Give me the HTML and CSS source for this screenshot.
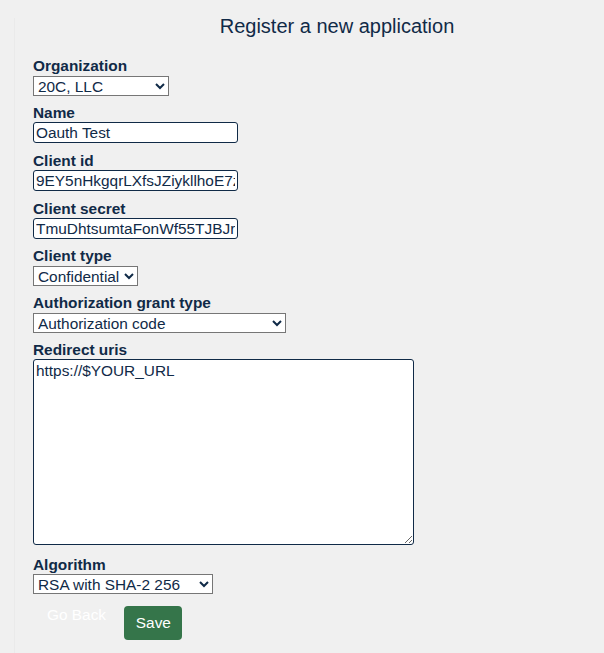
FILE: index.html
```html
<!DOCTYPE html>
<html lang="en">
<head>
<meta charset="utf-8">
<title>Register a new application</title>
<link rel="stylesheet" href="styles.css">
</head>
<body>
<div class="page">
  <h1 class="title">Register a new application</h1>
  <form class="form">
    <div class="field">
      <label class="label" for="org">Organization</label>
      <select id="org" class="select select-org"><option>20C, LLC</option></select>
    </div>
    <div class="field">
      <label class="label" for="name">Name</label>
      <input id="name" class="input" type="text" value="Oauth Test">
    </div>
    <div class="field">
      <label class="label" for="cid">Client id</label>
      <input id="cid" class="input" type="text" value="9EY5nHkgqrLXfsJZiykllhoE7zQw3RtPa8VbNcXd">
    </div>
    <div class="field">
      <label class="label" for="csec">Client secret</label>
      <input id="csec" class="input" type="text" value="TmuDhtsumtaFonWf55TJBJrKq2LmPzXeYv8Wn">
    </div>
    <div class="field">
      <label class="label" for="ctype">Client type</label>
      <select id="ctype" class="select select-type"><option>Confidential</option></select>
    </div>
    <div class="field">
      <label class="label" for="grant">Authorization grant type</label>
      <select id="grant" class="select select-grant"><option>Authorization code</option></select>
    </div>
    <div class="field field-textarea">
      <label class="label" for="uris">Redirect uris</label>
      <textarea id="uris" class="textarea">https://$YOUR_URL</textarea>
    </div>
    <div class="field">
      <label class="label" for="alg">Algorithm</label>
      <select id="alg" class="select select-alg"><option>RSA with SHA-2 256</option></select>
    </div>
    <div class="actions">
      <a class="back" href="#">Go Back</a>
      <button type="button" class="save">Save</button>
    </div>
  </form>
</div>
</body>
</html>
```
FILE: styles.css
```css
html, body {
  margin: 0;
  padding: 0;
  background: #f0f0f0;
}
body {
  font-family: "Liberation Sans", Arial, sans-serif;
  color: #102a47;
  overflow: hidden;
}
.page {
  margin: 18px 0 0 14px;
  border-left: 1px solid #eaeaea;
  min-height: 640px;
}
.title {
  margin: 0 0 0 55px;
  font-size: 20px;
  font-weight: normal;
  line-height: 16px;
  text-align: center;
}
.form {
  padding: 23.2px 0 0 18px;
  display: flex;
  flex-direction: column;
  align-items: flex-start;
}
.field {
  display: flex;
  flex-direction: column;
  align-items: flex-start;
  margin-bottom: 8.3px;
}
.field-textarea {
  margin-bottom: 10.5px;
}
.label {
  font-size: 15.4px;
  font-weight: bold;
  line-height: 17px;
  margin-bottom: 1.5px;
}
.select {
  font-family: "Liberation Sans", Arial, sans-serif;
  font-size: 15.4px;
  color: #102a47;
  height: 20px;
  box-sizing: border-box;
  margin: 0;
  background: #fff;
  border: 1px solid #767676;
  border-radius: 0;
}
.select-org { width: 136px; }
.select-type { width: 105px; }
.select-grant { width: 253px; }
.select-alg { width: 180px; }
.input {
  font-family: "Liberation Sans", Arial, sans-serif;
  font-size: 15.4px;
  color: #102a47;
  width: 205px;
  height: 21px;
  box-sizing: border-box;
  margin: 0;
  padding: 0 2px;
  border: 1px solid #102a47;
  border-radius: 3px;
  background: #fff;
}
.textarea {
  display: block;
  font-family: "Liberation Sans", Arial, sans-serif;
  font-size: 15.4px;
  color: #102a47;
  width: 381px;
  height: 186px;
  box-sizing: border-box;
  margin: 0;
  padding: 2px;
  border: 1px solid #102a47;
  border-radius: 3px;
  background: #fff;
  line-height: normal;
}
.actions {
  display: flex;
  align-items: flex-start;
  gap: 4.3px;
  margin-top: 3.5px;
}
.back {
  font-size: 15.4px;
  line-height: normal;
  color: #ffffff;
  text-decoration: none;
  padding: 0 14px;
}
.save {
  font-family: "Liberation Sans", Arial, sans-serif;
  font-size: 15.4px;
  line-height: normal;
  color: #fff;
  background: #35754a;
  border: none;
  border-radius: 4px;
  padding: 7.7px 11.5px;
  margin: 0;
}
```
